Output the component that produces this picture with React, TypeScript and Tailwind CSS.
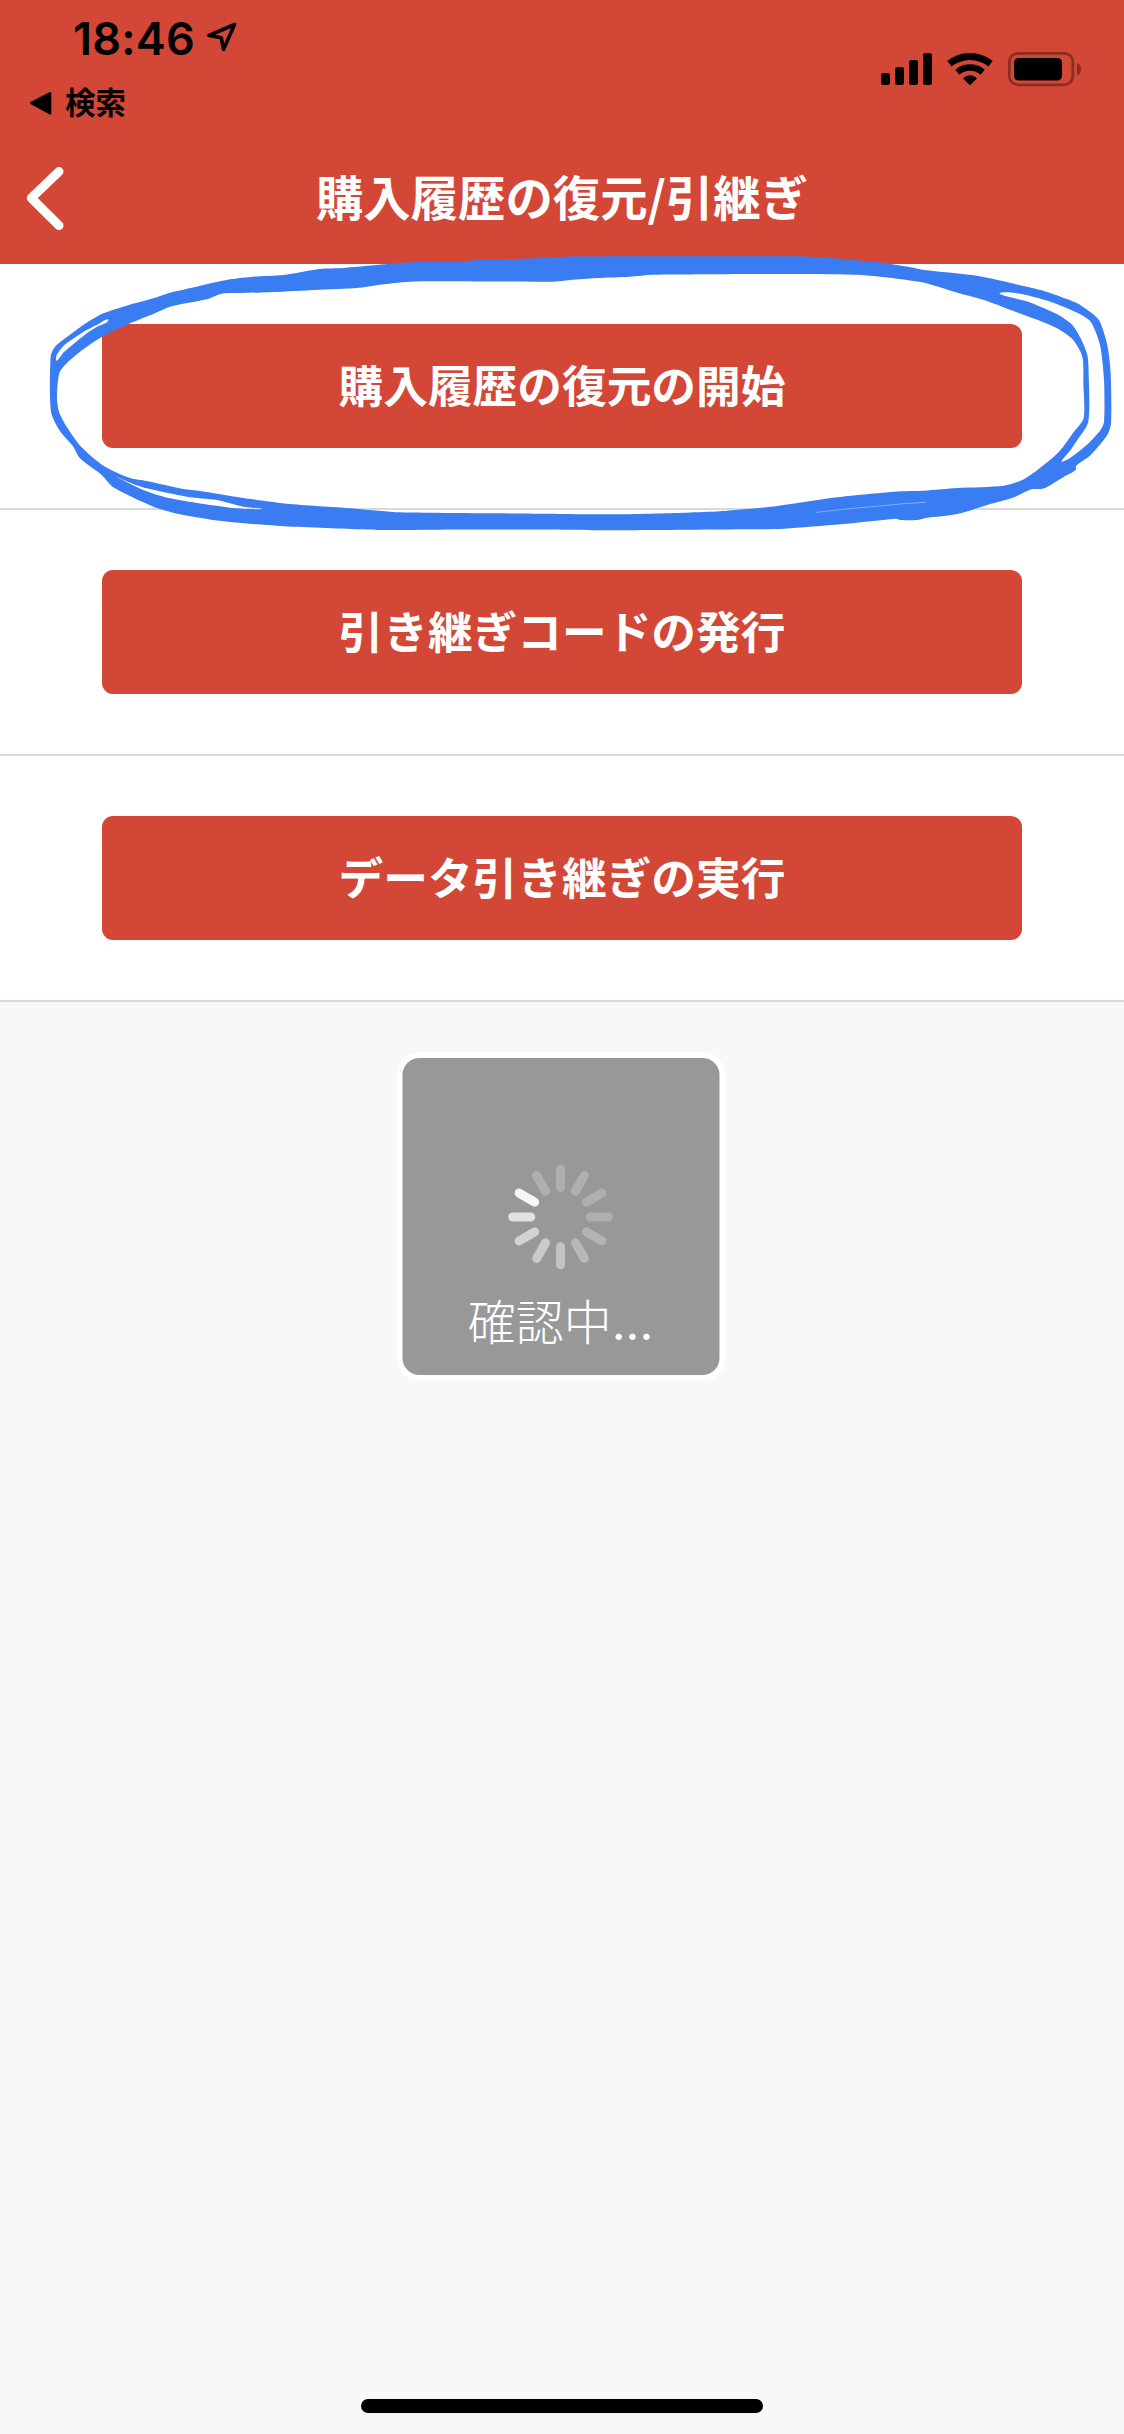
const FONT = "font-['Inter','Noto_Sans_CJK_JP',sans-serif]";

type Pt = [number, number];

// Closed Catmull-Rom curve through the given points.
function smooth(pts: Pt[]): string {
  const n = pts.length;
  let d = `M${pts[0][0]} ${pts[0][1]}`;
  for (let i = 0; i < n; i++) {
    const a = pts[(i - 1 + n) % n];
    const b = pts[i];
    const c = pts[(i + 1) % n];
    const e = pts[(i + 2) % n];
    const len = Math.hypot(c[0] - b[0], c[1] - b[1]);
    const t1 = len / (Math.hypot(c[0] - a[0], c[1] - a[1]) || 1) / 4;
    const t2 = len / (Math.hypot(e[0] - b[0], e[1] - b[1]) || 1) / 4;
    const x1 = b[0] + (c[0] - a[0]) * t1;
    const y1 = b[1] + (c[1] - a[1]) * t1;
    const x2 = c[0] - (e[0] - b[0]) * t2;
    const y2 = c[1] - (e[1] - b[1]) * t2;
    d += `C${x1.toFixed(1)} ${y1.toFixed(1)} ${x2.toFixed(1)} ${y2.toFixed(1)} ${c[0]} ${c[1]}`;
  }
  return d + "Z";
}

const OUTER: Pt[] = [
  [152, 350], [165, 320], [205, 288], [250, 255], [305, 222], [380, 197], [460, 175], [510, 158],
  [590, 140], [690, 118], [760, 110], [850, 105], [960, 87], [1030, 84], [1230, 67], [1370, 65],
  [1470, 58], [1580, 56], [1700, 50], [2280, 49], [2432, 50], [2492, 54], [2562, 60], [2652, 69],
  [2732, 82], [2772, 90], [2922, 106], [3032, 129], [3122, 150], [3182, 170], [3232, 190],
  [3282, 225], [3300, 245], [3322, 315], [3332, 400], [3333, 550], [3322, 585], [3272, 645],
  [3228, 678], [3227, 690], [3192, 710], [3137, 743], [3117, 747], [3094, 748], [3042, 772],
  [2962, 795], [2872, 822], [2777, 834], [2752, 840], [2702, 840], [2687, 836], [2522, 853],
  [2352, 866], [2232, 868], [1840, 871], [1690, 869], [1320, 869], [1140, 870], [1080, 868],
  [840, 858], [690, 846], [640, 840], [540, 823], [460, 800], [340, 742], [305, 705], [240, 655],
  [220, 620], [180, 573], [153, 515],
];

const INNER: Pt[] = [
  [178, 400], [200, 370], [240, 335], [305, 291], [390, 250], [460, 222], [510, 200], [620, 178],
  [665, 161], [730, 159], [850, 155], [990, 148], [1070, 144], [1140, 134], [1260, 124], [1660, 125],
  [1710, 120], [1790, 114], [1890, 110], [1960, 104], [2562, 104], [2762, 126], [2872, 158],
  [2952, 180], [3032, 210], [3162, 260], [3217, 297], [3247, 350], [3250, 430], [3251, 535],
  [3222, 575], [3177, 635], [3112, 690], [3067, 720], [3012, 737], [2872, 744], [2772, 752],
  [2702, 754], [2512, 772], [2332, 798], [2232, 808], [2160, 814], [2060, 818], [1840, 823],
  [1640, 821], [1200, 817], [1070, 806], [870, 792], [730, 774], [600, 753], [550, 747],
  [440, 723], [390, 714], [310, 677], [245, 622], [200, 560], [177, 515], [171, 470],
];

const GAPS: Pt[][] = [
  [[170, 362], [192, 336], [255, 284], [290, 261], [325, 240], [290, 255], [255, 273], [218, 297], [190, 318], [169, 348]],
  [[345, 708], [430, 750], [510, 775], [690, 803], [785, 807], [730, 800], [650, 780], [560, 770], [440, 745], [390, 728]],
  [
    [3002, 158], [3132, 179], [3232, 218], [3272, 245], [3300, 315], [3312, 420], [3312, 545],
    [3300, 572], [3252, 622], [3187, 665], [3212, 630], [3232, 600], [3265, 545], [3266, 400],
    [3262, 345], [3242, 295], [3217, 255], [3172, 223], [3092, 188],
  ],
];

const SCRIBBLE = [OUTER, INNER, ...GAPS].map(smooth).join("");

function Annotation() {
  return (
    <svg className="pointer-events-none absolute left-0 top-[240px] h-[310px] w-[1124px]" viewBox="0 0 3372 930">
      <path d={SCRIBBLE} fill="#3a7cf2" fillRule="evenodd" />
      <path d="M2447 817L2560 805L2712 791L2777 787" fill="none" stroke="#a9c6fa" strokeWidth="2" />
    </svg>
  );
}

function StatusBar() {
  return (
    <div className="flex h-[136px] justify-between">
      <div className="flex flex-col">
        <div className="flex h-[76px] items-center pl-[73px]">
          <span className="w-[123px] whitespace-nowrap text-[45px] font-semibold leading-none tracking-[0.2px]">18:46</span>
          <svg className="ml-[10px] h-[32px] w-[32px]" viewBox="0 0 32 32">
            <path d="M28.5 2.500L3 13.500L15.300 15.800L17.500 27.500Z" fill="none" stroke="black" strokeWidth="3.600" strokeLinejoin="round" />
          </svg>
        </div>
        <div className="flex h-[53px] items-center gap-[13px] pl-[29px]">
          <svg className="h-[24px] w-[23px]" viewBox="0 0 23 24">
            <path d="M2 12L21.300 2V22.500Z" stroke="black" strokeWidth="2" strokeLinejoin="round" />
          </svg>
          <span className="pt-[2px] text-[30.500px] font-bold leading-none">検索</span>
        </div>
      </div>
      <svg className="mt-[50px] mr-[40px] h-[40px] w-[204px]" viewBox="0 0 204 40">
        <rect x="1" y="23" width="9" height="12" rx="2.200" />
        <rect x="15" y="17" width="9" height="18" rx="2.200" />
        <rect x="29" y="10" width="9" height="25" rx="2.200" />
        <rect x="43" y="3" width="9" height="32" rx="2.200" />
        <g fill="none" stroke="black">
          <path d="M69.500 13.800A32.500 32.500 0 0 1 110.500 13.800" strokeWidth="7" />
          <path d="M77.300 22.200A19.500 19.500 0 0 1 102.700 22.200" strokeWidth="6.500" />
        </g>
        <path d="M83 28.400C87 24.300 93 24.300 97 28.400L90 35.300Z" />
        <rect x="129.300" y="3.300" width="63.500" height="31.500" rx="8.500" fill="none" stroke="#8a2d22" strokeWidth="2.700" />
        <rect x="134" y="8" width="48" height="22.500" rx="4.500" />
        <path d="M197 13C202.500 15 202.500 23.500 197 25.500Z" fill="#8a2d22" />
      </svg>
    </div>
  );
}

function Header() {
  return (
    <header className="h-[264px] bg-[#d34737]">
      <StatusBar />
      <div className="grid h-[125px] grid-cols-[80px_1fr_80px] items-center">
        <svg className="ml-[24px] h-[68px] w-[44px]" viewBox="0 0 44 68">
          <path d="M35 6.500L7.300 33L35 60.500" fill="none" stroke="white" strokeWidth="9" strokeLinecap="round" strokeLinejoin="round" />
        </svg>
        <h1 className="whitespace-nowrap pb-[6px] text-center font-['Noto_Sans_CJK_JP',sans-serif] text-[47.400px] font-bold leading-none text-white">
          購入履歴の復元/引継ぎ
        </h1>
      </div>
    </header>
  );
}

function ActionRow({ label }: { label: string }) {
  return (
    <div className="flex h-[246px] items-center justify-center border-b-2 border-[#d9d9db] bg-white">
      <button className="flex h-[124px] w-[920px] items-center justify-center rounded-[11px] bg-[#d34737] pt-[2px] text-[44.700px] font-bold leading-none text-white">
        {label}
      </button>
    </div>
  );
}

// Spoke colours, clockwise from twelve o'clock.
const SPOKES = [
  "#aeafb1", "#aeafb1", "#aeafb1", "#aeafb1", "#b2b3b4", "#b7b8b9",
  "#c2c3c4", "#c9cacb", "#d3d3d4", "#e2e2e2", "#f7f7f7", "#aeafb1",
];

function LoadingDialog() {
  return (
    <div className="mx-auto mt-[50px] flex h-[329px] w-[329px] -translate-x-[1.500px] flex-col items-center rounded-[23px] border-[6px] border-white bg-[#989898]">
      <svg className="mt-[104px] h-[110px] w-[110px] shrink-0" viewBox="-55 -55 110 110">
        {SPOKES.map((color, i) => (
          <rect key={i} x="-4.500" y="-52.300" width="9" height="27" rx="4.500" fill={color} transform={`rotate(${i * 30})`} />
        ))}
      </svg>
      <p className="mt-[21px] flex items-baseline whitespace-nowrap text-[48px] font-light leading-[60px] text-white">
        確認中<span className="font-['Inter'] font-normal">...</span>
      </p>
    </div>
  );
}

export default function App() {
  return (
    <div className={`relative flex h-[2434px] w-[1124px] flex-col overflow-hidden bg-[#f9f7f8] text-black ${FONT}`}>
      <Header />
      <main className="flex-1">
        <ActionRow label="購入履歴の復元の開始" />
        <ActionRow label="引き継ぎコードの発行" />
        <ActionRow label="データ引き継ぎの実行" />
        <LoadingDialog />
      </main>
      <div className="mx-auto mb-[21px] h-[14px] w-[402px] rounded-full bg-black" />
      <Annotation />
    </div>
  );
}
